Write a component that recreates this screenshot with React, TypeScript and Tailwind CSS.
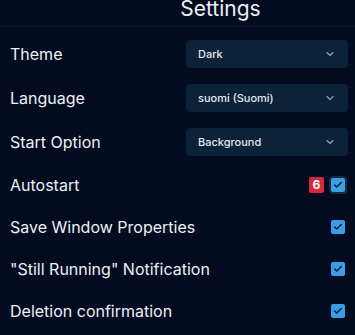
import { ChevronDown, Check } from "lucide-react";

const selects = [
  { label: "Theme", value: "Dark" },
  { label: "Language", value: "suomi (Suomi)" },
  { label: "Start Option", value: "Background" },
];

const toggles = [
  { label: "Autostart", badge: "6", focused: true },
  { label: "Save Window Properties" },
  { label: "\"Still Running\" Notification" },
  { label: "Deletion confirmation" },
];

function Checkbox({ focused }: { focused?: boolean }) {
  return (
    <span
      className={`flex h-[14px] w-[14px] items-center justify-center rounded-[2px] bg-[#3a9ee4] ${
        focused ? "ring-2 ring-[#1b2c44]" : ""
      }`}
    >
      <Check className="h-[10px] w-[10px] text-[#0b1a33]" strokeWidth={3.5} />
    </span>
  );
}

export default function App() {
  return (
    <div
      className="h-[335px] w-[355px] overflow-hidden bg-[#020b1f] text-[#eef0f4]"
      style={{ fontFamily: "Inter, 'Noto Sans', sans-serif" }}
    >
      <div className="mt-[-9px] flex h-[36px] items-center justify-center border-b border-[#0a1428] pl-[86px]">
        <h1 className="text-[21px] leading-none">Settings</h1>
      </div>

      <div className="flex flex-col pl-[10px] pr-[7px]">
        {selects.map((s, i) => (
          <div key={s.label} className={`flex h-[28px] items-center justify-between ${i === 0 ? "mt-[13px]" : "mt-[16px]"}`}>
            <span className="text-[16px]">{s.label}</span>
            <div className="flex h-[28px] w-[162px] items-center justify-between rounded-[4px] bg-[#0b2238] pl-[12px] pr-[12px]">
              <span className="text-[11px] font-medium text-[#e3e8ee]">{s.value}</span>
              <ChevronDown className="h-[12px] w-[12px] text-[#8b9ab0]" strokeWidth={2.5} />
            </div>
          </div>
        ))}

        {toggles.map((t, i) => (
          <div key={t.label} className={`flex h-[20px] items-center justify-between ${i === 0 ? "mt-[19px]" : "mt-[22px]"}`}>
            <span className="text-[16px]">{t.label}</span>
            <div className="flex items-center gap-[7px] pr-[3px]">
              {t.badge && (
                <span className="flex h-[16px] w-[15px] items-center justify-center rounded-[2px] bg-[#d42a3c] text-[12px] font-bold text-white">
                  {t.badge}
                </span>
              )}
              <Checkbox focused={t.focused} />
            </div>
          </div>
        ))}
      </div>
    </div>
  );
}
